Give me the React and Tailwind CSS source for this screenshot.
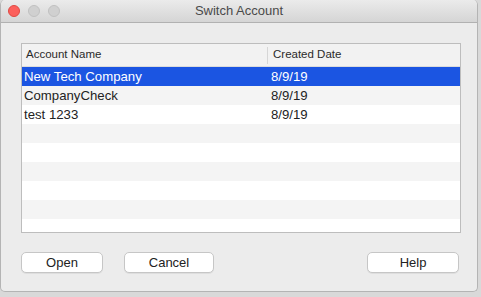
const rows = [
  { name: 'New Tech Company', date: '8/9/19' },
  { name: 'CompanyCheck', date: '8/9/19' },
  { name: 'test 1233', date: '8/9/19' },
  { name: '', date: '' },
  { name: '', date: '' },
  { name: '', date: '' },
  { name: '', date: '' },
  { name: '', date: '' },
  { name: '', date: '' },
];

const font = { fontFamily: '"Liberation Sans", Arial, sans-serif' };

function Light({ color }) {
  return <span className={`w-3 h-3 rounded-full border ${color}`} />;
}

function Btn({ children, className }) {
  return (
    <button
      className={`h-[21px] bg-white border border-[#c6c6c6] rounded-[5px] text-[13px] text-[#222] shadow-[0_1px_0_rgba(0,0,0,0.06)] ${className}`}
    >
      {children}
    </button>
  );
}

export default function App() {
  return (
    <div className="w-[481px] h-[297px] bg-[#d9d9d9] overflow-hidden" style={font}>
      <div className="w-[478px] h-[292px] bg-[#ececec] border border-[#b4b4b4] border-t-0 rounded-[5px] overflow-hidden flex flex-col">
        <div className="h-[23px] shrink-0 relative flex items-center bg-gradient-to-b from-[#ebebeb] to-[#d5d5d5] border-b border-[#b1b1b1]">
          <div className="flex items-center gap-[8px] pl-[7px]">
            <Light color="bg-[#fc605c] border-[#de4943]" />
            <Light color="bg-[#d0d0d0] border-[#c0c0c0]" />
            <Light color="bg-[#d0d0d0] border-[#c0c0c0]" />
          </div>
          <div className="absolute inset-0 flex items-center justify-center text-[13px] text-[#4a4a4a]">
            Switch Account
          </div>
        </div>

        <div className="pt-[20px] pl-[20px]">
          <div className="w-[440px] h-[190px] bg-white border border-[#bdbdbd] overflow-hidden">
            <div className="h-[23px] flex items-center bg-[#f2f2f2] border-b border-[#dcdcdc] text-[11.5px] text-[#2a2a2a]">
              <div className="w-[245px] pl-[4px]">Account Name</div>
              <div className="h-[17px] border-l border-[#d6d6d6]" />
              <div className="pl-[5px]">Created Date</div>
            </div>
            {rows.map((r, i) => (
              <div
                key={i}
                className={`h-[19px] flex items-center text-[13.2px] ${
                  i === 0 ? 'bg-[#1b55e2] text-white' : i % 2 === 1 ? 'bg-[#f4f4f4] text-[#222]' : 'bg-white text-[#222]'
                }`}
              >
                <div className="w-[246px] pl-[2px]">{r.name}</div>
                <div className="pl-[3px]">{r.date}</div>
              </div>
            ))}
          </div>
        </div>

        <div className="flex items-center pl-[20px] pt-[19px]">
          <Btn className="w-[82px]">Open</Btn>
          <Btn className="w-[90px] ml-[21px]">Cancel</Btn>
          <Btn className="w-[92px] ml-auto mr-[18px]">Help</Btn>
        </div>
      </div>
    </div>
  );
}
